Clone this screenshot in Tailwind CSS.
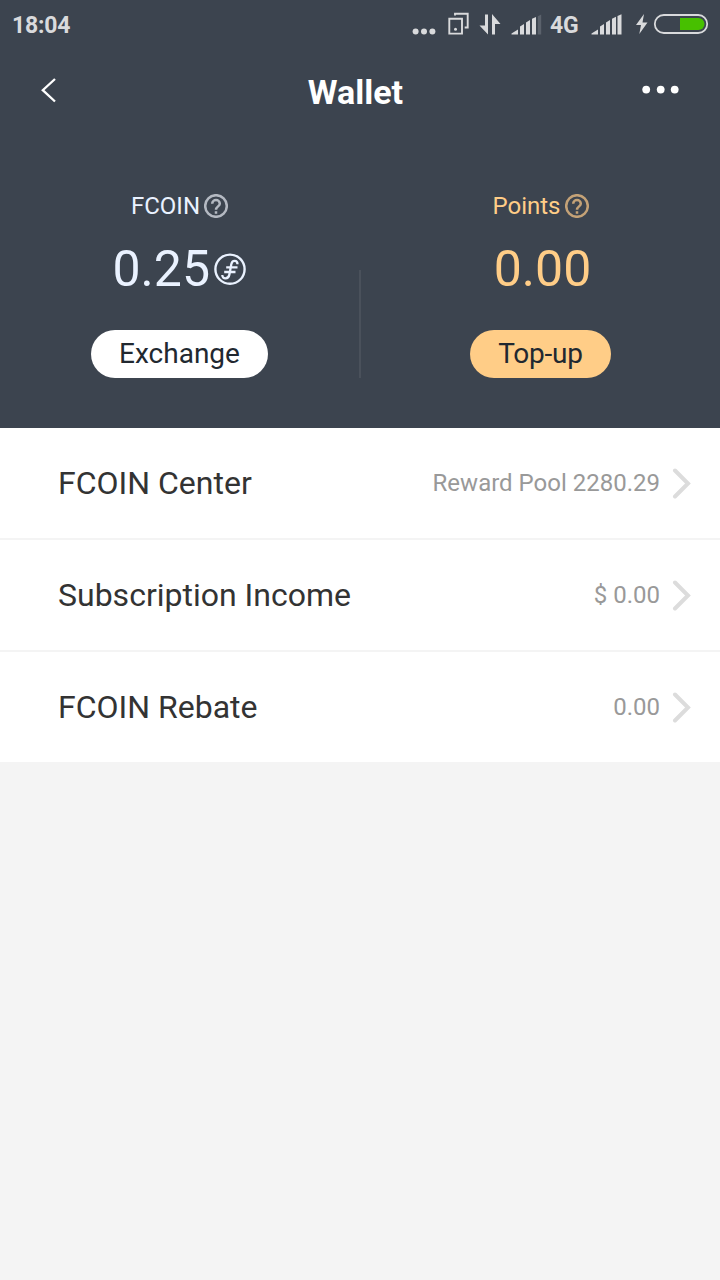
<!DOCTYPE html>
<html lang="en">
<head>
<meta charset="utf-8">
<title>Wallet</title>
<script src="https://cdn.jsdelivr.net/npm/@tailwindcss/browser@4"></script>
</head>
<body class="bg-[#f4f4f4] font-['Roboto',sans-serif] w-[720px] h-[1280px] overflow-hidden">
<header class="bg-[#3c444f] h-[428px] flex flex-col">
  <div class="h-[50px] flex items-center text-[#d9dadc] font-bold text-[23px]">
    <span class="pl-[12px] w-[400px] leading-[48px] pt-[2px] tracking-[-0.2px]">18:04</span>
    <svg class="shrink-0" width="150" height="50" viewBox="400 0 150 50" fill="#d9dadc">
      <circle cx="415.6" cy="31.5" r="3"/><circle cx="424" cy="31.5" r="3"/><circle cx="432.4" cy="31.5" r="3"/>
      <path d="M449.300 18.800h12.700v14.800h-12.700zM455 15.500v-1.700h12.700v13.700h-3" fill="none" stroke="#d9dadc" stroke-width="1.9"/>
      <circle cx="455.500" cy="29.300" r="1.500"/>
      <path d="M485 14.500h3v20L479.500 25.500h5.500zM492 34.500h3V24h5.500L492 14z"/>
      <path d="M511.500 34.500v-1l6.500-4v5zM520 34.500v-8l4-2.500v10.500zM526 34.500v-12l4-2.500v14.500zM532 34.500V18.800l4-1.800v17.500z"/>
      <path d="M537.800 34.500V16.200l3.400-1.700v20z" fill="#5b626c"/>
    </svg>
    <span class="w-[35px] leading-[48px] pt-[2px] shrink-0 tracking-[-0.3px]">4G</span>
    <svg class="shrink-0" width="135" height="50" viewBox="585 0 135 50" fill="#d9dadc">
      <path d="M591.500 34.500v-1l6.500-4v5zM600 34.500v-8l4-2.500v10.500zM606 34.500v-12l4-2.500v14.500zM612 34.500V18.800l4-2v17.700zM617.500 34.500V16l4-1.800v20.300z"/>
      <path d="M644 14l-8 11h5l-1.700 9L647.500 22.500h-5z"/>
      <rect x="654.800" y="15" width="52.400" height="18" rx="9" fill="none" stroke="#d9dadc" stroke-width="1.800"/>
      <path d="M680 18h18.500a6 6 0 0 1 0 12H680z" fill="#47c000"/>
    </svg>
  </div>
  <nav class="h-[86px] flex items-start text-white">
    <svg class="shrink-0" width="290" height="80" viewBox="0 50 290 80"><path d="M55 79L42.800 90.200l12.200 11.300" fill="none" stroke="#fff" stroke-width="2.300"/></svg>
    <h1 class="w-[131px] text-center text-[34px] leading-[40px] font-bold pt-[22px]">Wallet</h1>
    <svg class="ml-auto shrink-0" width="100" height="80" viewBox="620 50 100 80" fill="#fff"><circle cx="646.200" cy="89.600" r="3.900"/><circle cx="660.700" cy="89.600" r="3.900"/><circle cx="674.700" cy="89.600" r="3.900"/></svg>
  </nav>
  <div class="flex">
    <section class="w-[359px] flex flex-col items-center pt-[54px] text-[#eaf2ff]">
      <div class="flex items-center gap-1 h-8 text-2xl leading-8"><span>FCOIN</span>
        <svg width="24" height="24" viewBox="0 0 24 24" fill="none" stroke="#b4b9c2" stroke-width="2.500"><circle cx="12" cy="12" r="10.800"/><path d="M8.200 9.700a3.800 3.600 0 0 1 7.600 0c0 2.600-3.800 2.800-3.800 6M12 17.200v2.500"/></svg>
      </div>
      <div class="flex items-center h-[60px] mt-[17px] gap-[3.500px] -ml-px text-[50px] leading-[60px]"><span>0.25</span>
        <svg width="32" height="32" viewBox="0 0 32 32" fill="none" stroke="#eaf2ff" stroke-width="2.300"><circle cx="16" cy="16.200" r="14.600" stroke-width="2.400"/><path d="M23.500 11.200c0-4.200-5.300-4.600-6.200 0L15.400 21.500c-.9 5-7.100 5-7.100.6M12.200 14.300h11.300M10.200 19h11.300"/></svg>
      </div>
      <div class="mt-[31px] h-12 w-[177px] rounded-full bg-white text-[#212830] text-[28px] leading-[47px] text-center">Exchange</div>
    </section>
    <div class="w-[2px] h-[108px] mt-[134px] bg-[#4a515b]"></div>
    <section class="w-[359px] flex flex-col items-center pt-[54px] text-[#ffcd87]">
      <div class="flex items-center gap-1 h-8 text-2xl leading-8"><span>Points</span>
        <svg width="24" height="24" viewBox="0 0 24 24" fill="none" stroke="#c4a277" stroke-width="2.500"><circle cx="12" cy="12" r="10.800"/><path d="M8.200 9.700a3.800 3.600 0 0 1 7.600 0c0 2.600-3.800 2.800-3.800 6M12 17.200v2.500"/></svg>
      </div>
      <div class="h-[60px] mt-[17px] pl-1 text-[50px] leading-[60px]">0.00</div>
      <div class="mt-[31px] h-12 w-[141px] rounded-full bg-[#ffcd87] text-[#212830] text-[28px] leading-[47px] text-center tracking-[-0.25px]">Top-up</div>
    </section>
  </div>
</header>
<main class="bg-white text-[#333]">
  <div class="h-[112px] border-b-2 border-[#f4f4f4] flex items-center pl-[58px] pr-[29px]">
    <span class="text-[32px]">FCOIN Center</span><span class="ml-auto text-2xl text-[#999]">Reward Pool 2280.29</span>
    <svg class="ml-3" width="19" height="32" viewBox="0 0 19 32" fill="none" stroke="#dcdcdc" stroke-width="4" stroke-linecap="round"><path d="M3 3.500L16 16.500 3 29.500"/></svg>
  </div>
  <div class="h-[112px] border-b-2 border-[#f4f4f4] flex items-center pl-[58px] pr-[29px]">
    <span class="text-[32px]">Subscription Income</span><span class="ml-auto text-2xl text-[#999]">$ 0.00</span>
    <svg class="ml-3" width="19" height="32" viewBox="0 0 19 32" fill="none" stroke="#dcdcdc" stroke-width="4" stroke-linecap="round"><path d="M3 3.500L16 16.500 3 29.500"/></svg>
  </div>
  <div class="h-[110px] flex items-center pl-[58px] pr-[29px]">
    <span class="text-[32px]">FCOIN Rebate</span><span class="ml-auto text-2xl text-[#999]">0.00</span>
    <svg class="ml-3" width="19" height="32" viewBox="0 0 19 32" fill="none" stroke="#dcdcdc" stroke-width="4" stroke-linecap="round"><path d="M3 3.500L16 16.500 3 29.500"/></svg>
  </div>
</main>
</body>
</html>
